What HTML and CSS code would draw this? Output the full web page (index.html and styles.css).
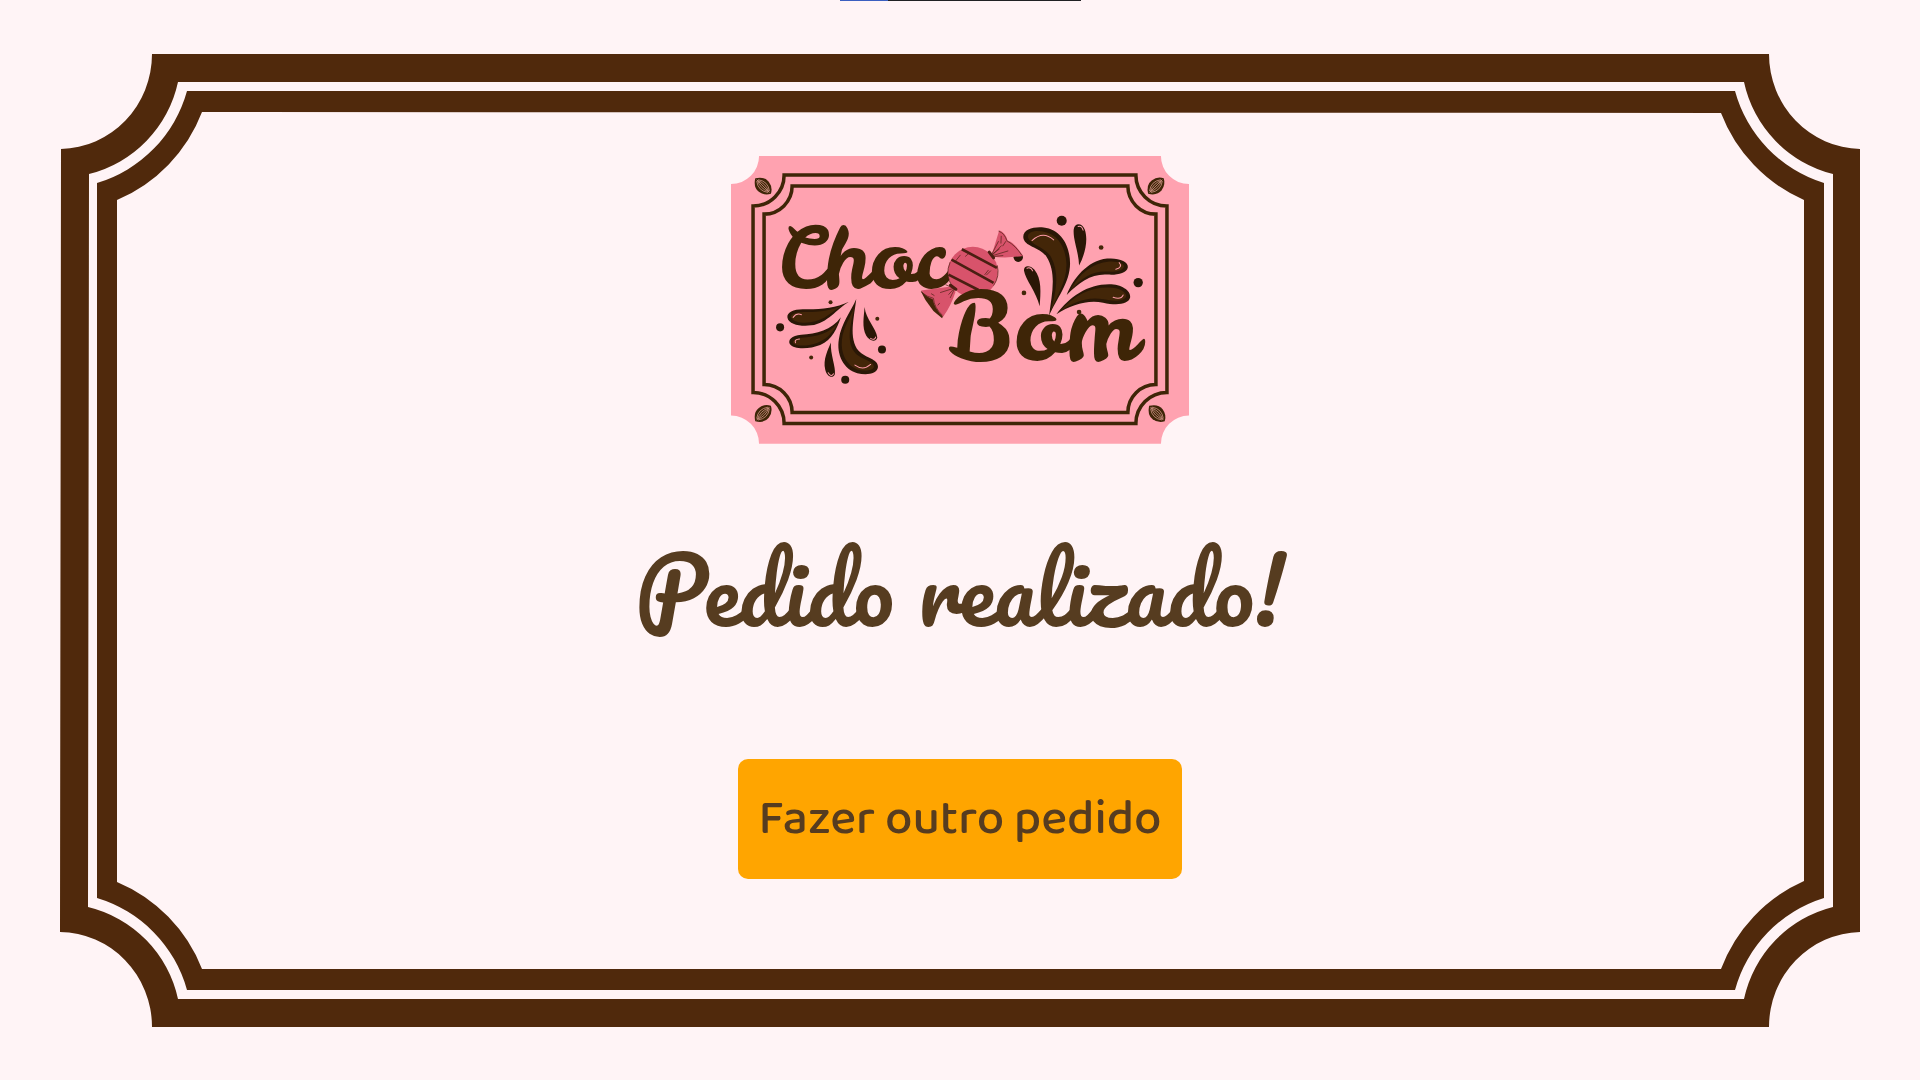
FILE: index.html
```html
<!DOCTYPE html>
<html lang="pt-BR">
<head>
<meta charset="utf-8">
<meta name="viewport" content="width=device-width, initial-scale=1">
<title>Choco Bom - Pedido realizado</title>
<link rel="stylesheet" href="styles.css">
</head>
<body>
<div class="top-strip"><span class="top-strip-progress"></span></div>
<main class="page">
  <svg class="frame" viewBox="0 0 1920 1080" preserveAspectRatio="none" aria-hidden="true">
    <path fill-rule="evenodd" d="M152 54H1769A93 95 0 0 0 1860 149V932A93 95 0 0 0 1769 1027H152A93 95 0 0 0 60 932L61 149A93 95 0 0 0 152 54Z
      M178 82A121 121 0 0 1 89 174L88 907A121 121 0 0 1 178 999H1744A121 121 0 0 1 1833 907V174A121 121 0 0 1 1744 82Z"/>
    <path fill-rule="evenodd" d="M187 91H1735A133 133 0 0 0 1824 183V898A133 133 0 0 0 1735 990H187A133 133 0 0 0 97 898V183A133 133 0 0 0 187 91Z
      M202 112A156 156 0 0 1 117 200V882A156 156 0 0 1 202 969H1721A156 156 0 0 1 1804 881V200A156 156 0 0 1 1721 113Z"/>
  </svg>
  <div class="content">
    <svg class="logo" viewBox="0 0 457 287" role="img" aria-label="Choco Bom">
      <defs>
        <g id="bean">
          <path fill="#3e2507" d="M-11 0Q-6-8 1-7Q8-6 11 0Q8 6 1 7Q-6 8-11 0Z"/>
          <path fill="none" stroke="#c98f80" stroke-width=".8" d="M-9 0H9M-8-1Q0-7 8-1M-8 1Q0 7 8 1M-8 0Q0-4 8 0M-8 0Q0 4 8 0"/>
        </g>
      </defs>
      <path fill="#ffa2b0" d="M28 0H429A28 28 0 0 0 457 28V259A28 28 0 0 0 429 287H28A28 28 0 0 0 0 259V28A28 28 0 0 0 28 0Z"/>
      <g fill="none" stroke="#3e2507" stroke-width="3.5">
        <path d="M53 19H404A31 31 0 0 0 435 50V236A31 31 0 0 0 404 267H53A31 31 0 0 0 22 236V50A31 31 0 0 0 53 19Z"/>
        <path d="M61 30H396A28 28 0 0 0 424 58V228A28 28 0 0 0 396 256H61A28 28 0 0 0 33 228V58A28 28 0 0 0 61 30Z"/>
      </g>
      <use href="#bean" transform="translate(32 30) rotate(45)"/>
      <use href="#bean" transform="translate(424 30) rotate(-45)"/>
      <use href="#bean" transform="translate(32 257) rotate(-45)"/>
      <use href="#bean" transform="translate(425 257) rotate(45)"/>

      <text class="logo-text logo-text-top" x="46" y="132">Choc</text>

      <!-- upper splash -->
      <g transform="translate(178 59) scale(.3333)">
        <g fill="#2a1706">
          <path d="M418 302C426 240 442 174 411 125C391 94 343 95 341 66C340 42 373 34 402 37C453 42 481 91 481 145C481 203 440 250 418 302Z"/>
          <path d="M508 151C507 110 489 73 492 42C495 22 517 22 525 43C536 74 526 117 508 151Z"/>
          <path d="M390 273C381 232 347 193 343 166C342 150 361 148 374 163C397 190 393 234 390 273Z"/>
          <path d="M471 239C491 189 532 137 592 130C626 127 656 138 654 156C651 175 620 180 593 178C544 175 509 201 471 239Z"/>
          <path d="M440 297C480 244 533 207 598 207C634 207 663 225 661 246C656 268 620 271 580 262C531 253 484 269 440 297Z"/>
          <circle cx="456" cy="17" r="15"/><circle cx="685" cy="202" r="14"/><circle cx="326" cy="126" r="14"/>
        </g>
        <g fill="#432608">
          <path d="M422 291C436 238 453 178 424 125C409 97 360 87 355 66C352 50 378 44 400 49C446 57 467 97 470 143C473 198 439 244 422 291Z"/>
          <path d="M480 229C507 175 547 144 599 139C625 137 647 147 642 156C634 170 611 170 591 169C545 168 516 187 480 229Z"/>
          <path d="M454 285C494 240 543 216 596 217C629 217 652 232 649 244C642 256 617 260 582 252C531 243 493 261 454 285Z"/>
          <circle cx="574" cy="97" r="7"/><circle cx="343" cy="233" r="7"/><circle cx="508" cy="290" r="7"/>
        </g>
        <g class="shine">
          <path d="M367 76Q400 45 432 74"/><path d="M505 34Q516 31 520 45"/><path d="M352 159Q363 154 369 167"/>
          <path d="M628 142Q640 155 618 162"/><path d="M610 246Q634 254 640 239"/>
        </g>
      </g>

      <!-- lower splash -->
      <g transform="translate(-11 134) scale(.3333)">
        <g fill="#2a1706">
          <path d="M408 26C402 79 384 145 415 181C435 204 474 204 473 230C471 251 438 255 411 248C370 237 348 193 356 146C363 99 392 63 408 26Z"/>
          <path d="M386 34C346 53 299 58 252 57C222 56 199 66 202 82C206 102 240 109 273 105C323 98 349 56 386 34Z"/>
          <path d="M362 81C334 120 289 131 243 133C214 135 203 149 209 161C222 179 270 176 300 164C337 148 350 114 362 81Z"/>
          <path d="M433 50C436 86 468 114 471 141C467 157 447 152 438 136C424 112 431 77 433 50Z"/>
          <path d="M332 156C330 193 347 227 344 251C337 267 319 257 315 237C308 207 323 179 332 156Z"/>
          <circle cx="180" cy="111" r="12"/><circle cx="485" cy="177" r="12"/><circle cx="375" cy="268" r="12"/>
        </g>
        <g fill="#432608">
          <path d="M404 45C394 89 376 151 402 184C419 208 460 210 461 228C460 241 432 243 411 237C378 225 361 189 365 149C369 109 393 78 404 45Z"/>
          <path d="M371 43C335 60 292 66 251 65C226 65 207 74 213 82C222 96 247 99 270 96C316 90 338 59 371 43Z"/>
          <path d="M355 94C330 131 285 139 245 142C224 144 214 153 220 159C233 169 269 167 294 156C327 142 343 118 355 94Z"/>
          <circle cx="331" cy="36" r="6"/><circle cx="471" cy="85" r="6"/><circle cx="273" cy="201" r="6"/>
        </g>
        <g class="shine">
          <path d="M404 224Q429 242 451 222"/><path d="M219 81Q229 67 244 73"/><path d="M226 157Q222 147 238 146"/>
          <path d="M451 144Q463 151 466 140"/><path d="M324 247Q333 261 340 250"/>
        </g>
      </g>

      <!-- wrapped candy -->
      <g transform="translate(178 59) scale(.3333)" stroke-linejoin="round">
        <path fill="#432608" d="M34 227L48 254L72 287L98 309L104 294L90 254Z"/>
        <path fill="#d8536b" d="M245 124L269 45Q288 52 294 76Q316 83 340 122Q293 130 245 124Z"/>
        <path fill="#d8536b" d="M130 213L35 226Q46 243 70 252Q75 281 101 304Q124 273 138 230Z"/>
        <circle cx="190" cy="170" r="75" fill="#d8536b"/>
        <path fill="none" stroke="#4a1f12" stroke-width="8" d="M157 102L262 158M126 133L252 203M117 178L207 224"/>
        <path fill="none" stroke="#4a1f12" stroke-width="2" d="M128 213A75 75 0 0 1 122 141M263 150A75 75 0 0 1 252 211M267 48Q285 54 292 77Q318 91 337 121M36 231Q55 246 72 249Q74 277 99 300M246 118L267 78M249 119L276 91M250 121L296 107M248 117L270 101M250 124L281 121M130 218L108 208M130 220L92 232M132 222L117 238M134 223L122 248M275 62L274 85M289 78L279 93M153 119L137 139M181 112L167 124M225 179L237 164M230 180L244 166M65 235L75 241M85 270L91 263"/>
        <path fill="none" stroke="#4a1f12" stroke-width="9" stroke-linecap="round" d="M239 111L252 128M123 210L139 222"/>
      </g>

      <text class="logo-text logo-text-bottom" x="216" y="204">Bom</text>
    </svg>
    <h1 class="title">Pedido realizado!</h1>
    <button class="order-button" type="button">Fazer outro pedido</button>
  </div>
</main>
</body>
</html>
```
FILE: styles.css
```css
* {
  box-sizing: border-box;
}

body {
  margin: 0;
  background: #fff4f6;
  color: #563c20;
  font-family: "Baloo 2", Lato, sans-serif;
}

.top-strip {
  position: absolute;
  top: 0;
  left: 50%;
  width: 241px;
  height: 1px;
  margin-left: -120px;
  background: #202124;
}

.top-strip-progress {
  display: block;
  width: 20%;
  height: 100%;
  background: #3b5fc0;
}

.page {
  display: grid;
  min-height: 100vh;
}

.frame,
.content {
  grid-area: 1 / 1;
}

.frame {
  width: 100%;
  height: 100%;
  fill: #50290c;
}

.content {
  display: flex;
  flex-direction: column;
  align-items: center;
  padding: 156px 120px;
}

.logo {
  width: 458px;
  max-width: 100%;
}

.logo-text {
  fill: #3e2507;
  font-family: "Leckerli One", Pacifico, Lato, sans-serif;
}

.logo-text-top {
  font-size: 84px;
}

.logo-text-bottom {
  font-size: 94px;
}

.shine {
  fill: none;
  stroke: #ff9aa8;
  stroke-width: 3;
  stroke-linecap: round;
}

.title {
  margin: 63px 0 88px;
  font-family: Pacifico, Lato, sans-serif;
  font-size: 90px;
  font-weight: 400;
  line-height: 164px;
  text-align: center;
}

.order-button {
  height: 120px;
  padding: 2px 20px 0;
  border: 0;
  border-radius: 10px;
  background: #ffa500;
  color: inherit;
  font-family: inherit;
  font-size: 49px;
  font-weight: 550;
  cursor: pointer;
}
```
